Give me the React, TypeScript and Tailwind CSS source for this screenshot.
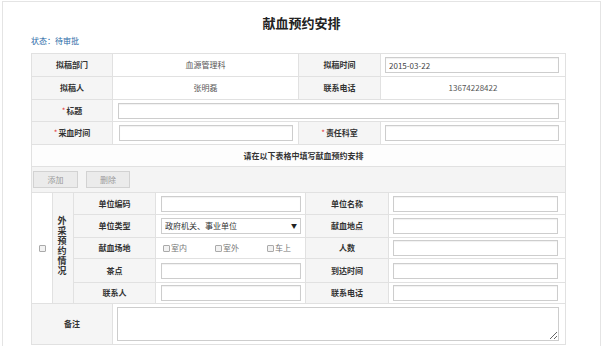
import React from "react";

const lab = "flex items-center justify-center bg-[#f5f5f5] border-r border-b border-[#e1e1e1] font-bold text-[#333]";
const val = "flex items-center justify-center bg-white border-r border-b border-[#e1e1e1] text-[#555]";
const box = "flex items-center bg-white border-r border-b border-[#e1e1e1]";
const inp = "block w-full h-[16px] border border-[#cdcdcd] bg-white px-[3px] text-[8px] text-[#444] outline-none shadow-[inset_0_1px_1px_rgba(0,0,0,0.06)]";

function Star() {
    return <span className="text-[#e4393c] font-normal mr-[1px]">*</span>;
}

function Check() {
    return <span className="inline-block w-[7px] h-[7px] border border-[#aaaaaa] bg-[#f2f2f2] rounded-[1px]" />;
}

export default function App() {
    return (
        <div className="w-[604px] h-[346px] overflow-hidden bg-white font-['Noto_Sans_CJK_SC',sans-serif]">
            <div className="ml-[2px] mt-[1px] w-[599px] h-[420px] border border-[#e4e4e4]">
                <div className="pt-[13px] text-center text-[13px] leading-[16px] font-bold text-[#222]">
                    献血预约安排
                </div>
                <div className="mt-[4px] ml-[28px] text-[8px] leading-[12px] text-[#2b6ca8]">
                    状态：待审批
                </div>

                <div className="mt-[6px] ml-[28px] w-[535px] border-l border-t border-[#e1e1e1] text-[8px] leading-[10px]">
                    <div className="grid grid-cols-[81px_186px_82px_185px] h-[23px]">
                        <div className={lab}>拟稿部门</div>
                        <div className={val}>血源管理科</div>
                        <div className={lab}>拟稿时间</div>
                        <div className={box + " pl-[4px] pr-[6px]"}>
                            <input className={inp} defaultValue="2015-03-22" />
                        </div>
                    </div>
                    <div className="grid grid-cols-[81px_186px_82px_185px] h-[23px]">
                        <div className={lab}>拟稿人</div>
                        <div className={val}>张明磊</div>
                        <div className={lab}>联系电话</div>
                        <div className={val}>13674228422</div>
                    </div>
                    <div className="grid grid-cols-[81px_453px] h-[22px]">
                        <div className={lab}><Star />标题</div>
                        <div className={box + " pl-[5px] pr-[6px]"}>
                            <input className={inp} />
                        </div>
                    </div>
                    <div className="grid grid-cols-[81px_186px_82px_185px] h-[23px]">
                        <div className={lab}><Star />采血时间</div>
                        <div className={box + " pl-[6px] pr-[5px]"}>
                            <input className={inp} />
                        </div>
                        <div className={lab}><Star />责任科室</div>
                        <div className={box + " pl-[4px] pr-[6px]"}>
                            <input className={inp} />
                        </div>
                    </div>
                    <div className="h-[22px] flex items-center justify-center bg-[#fdfdfd] border-r border-b border-[#e1e1e1] font-bold text-[#333] pl-[10px]">
                        请在以下表格中填写献血预约安排
                    </div>
                    <div className="h-[26px] flex items-center gap-[8px] pl-[1px] bg-[#f4f4f4] border-r border-b border-[#e1e1e1]">
                        <button className="w-[45px] h-[17px] border border-[#d2d2d2] bg-[#ebebeb] text-[#9a9a9a] text-[8px]">添加</button>
                        <button className="w-[44px] h-[17px] border border-[#d2d2d2] bg-[#ebebeb] text-[#9a9a9a] text-[8px]">删除</button>
                    </div>

                    <div className="flex">
                        <div className="w-[21px] flex items-center justify-center bg-white border-r border-b border-[#e1e1e1]">
                            <Check />
                        </div>
                        <div className="w-[21px] flex items-center justify-center pr-[3px] pb-[4px] bg-[#f5f5f5] border-r border-b border-[#e1e1e1] font-bold text-[#333] text-[9px] leading-[10px]">
                            <span className="[writing-mode:vertical-rl] tracking-[1px]">外采预约情况</span>
                        </div>
                        <div className="w-[492px]">
                            <div className="grid grid-cols-[82px_150px_83px_177px] h-[22px]">
                                <div className={lab}>单位编码</div>
                                <div className={box + " pl-[5px] pr-[4px]"}>
                                    <input className={inp} />
                                </div>
                                <div className={lab}>单位名称</div>
                                <div className={box + " pl-[4px] pr-[7px]"}>
                                    <input className={inp} />
                                </div>
                            </div>
                            <div className="grid grid-cols-[82px_150px_83px_177px] h-[23px]">
                                <div className={lab}>单位类型</div>
                                <div className={box + " pl-[5px] pr-[4px]"}>
                                    <div className="relative w-full">
                                        <select className="appearance-none block w-full h-[16px] border border-[#cdcdcd] bg-white pl-[3px] text-[8px] text-[#333] outline-none">
                                            <option>政府机关、事业单位</option>
                                        </select>
                                        <span className="absolute right-[4px] top-[4px] text-[6px] leading-[8px] text-[#222]">▼</span>
                                    </div>
                                </div>
                                <div className={lab}>献血地点</div>
                                <div className={box + " pl-[4px] pr-[7px]"}>
                                    <input className={inp} />
                                </div>
                            </div>
                            <div className="grid grid-cols-[82px_150px_83px_177px] h-[21px]">
                                <div className={lab}>献血场地</div>
                                <div className={box + " pl-[7px] text-[#777]"}>
                                    <span className="w-[52px] flex items-center gap-[1px]"><Check />室内</span>
                                    <span className="w-[52px] flex items-center gap-[1px]"><Check />室外</span>
                                    <span className="flex items-center gap-[1px]"><Check />车上</span>
                                </div>
                                <div className={lab}>人数</div>
                                <div className={box + " pl-[4px] pr-[7px]"}>
                                    <input className={inp} />
                                </div>
                            </div>
                            <div className="grid grid-cols-[82px_150px_83px_177px] h-[24px]">
                                <div className={lab}>茶点</div>
                                <div className={box + " pl-[5px] pr-[4px]"}>
                                    <input className={inp} />
                                </div>
                                <div className={lab}>到达时间</div>
                                <div className={box + " pl-[4px] pr-[7px]"}>
                                    <input className={inp} />
                                </div>
                            </div>
                            <div className="grid grid-cols-[82px_150px_83px_177px] h-[21px]">
                                <div className={lab}>联系人</div>
                                <div className={box + " pl-[5px] pr-[4px]"}>
                                    <input className={inp} />
                                </div>
                                <div className={lab}>联系电话</div>
                                <div className={box + " pl-[4px] pr-[7px]"}>
                                    <input className={inp} />
                                </div>
                            </div>
                        </div>
                    </div>

                    <div className="grid grid-cols-[81px_453px] h-[41px]">
                        <div className={lab}>备注</div>
                        <div className="bg-white border-r border-b border-[#e1e1e1] pl-[4px] pr-[6px] pt-[3px]">
                            <textarea className="block w-full h-[34px] border border-[#cdcdcd] bg-white text-[8px] outline-none" />
                        </div>
                    </div>
                </div>
            </div>
        </div>
    );
}
